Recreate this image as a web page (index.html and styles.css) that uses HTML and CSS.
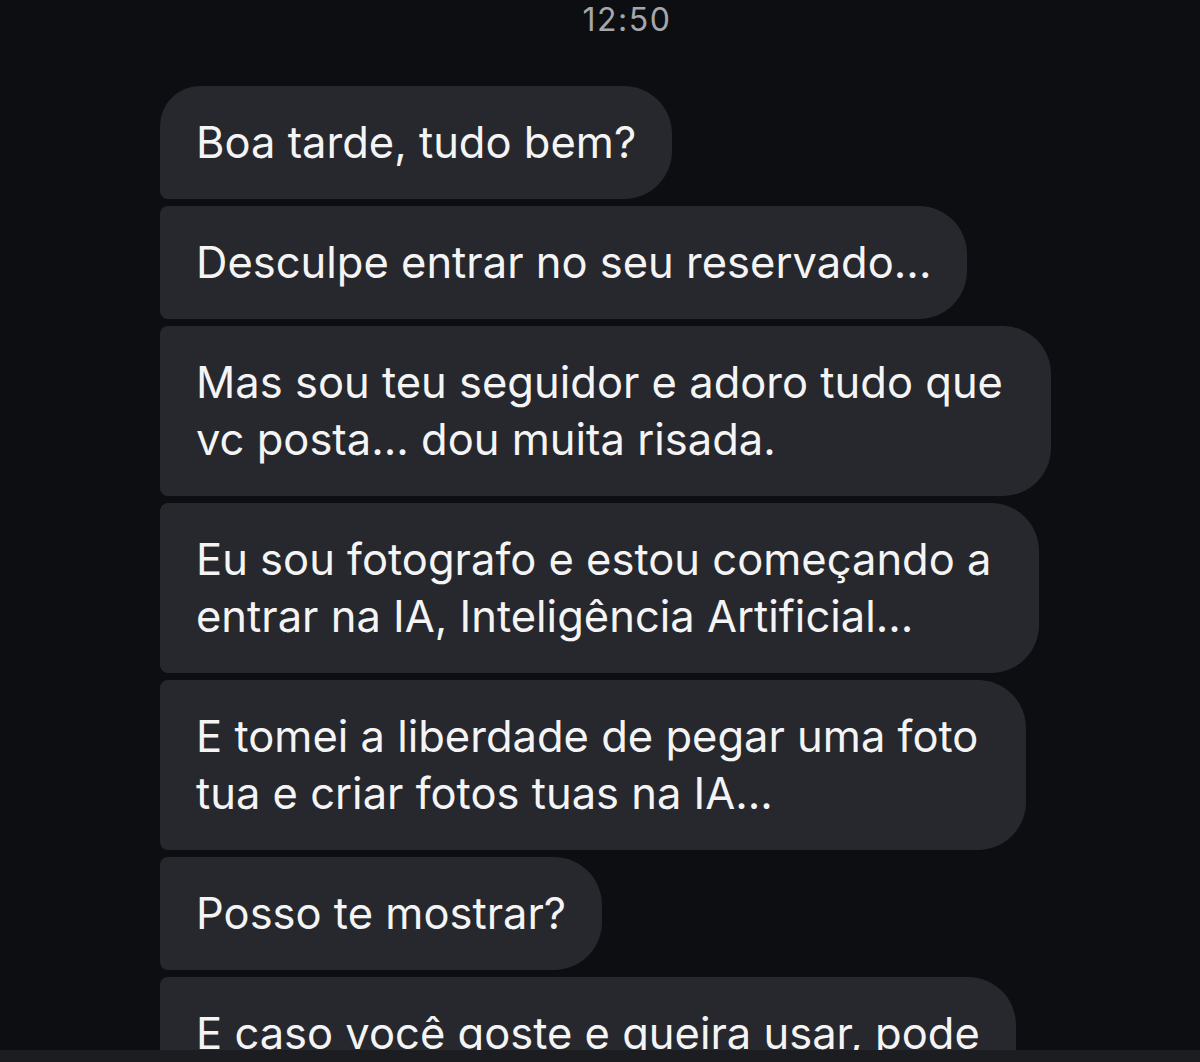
FILE: index.html
```html
<!DOCTYPE html>
<html lang="pt">
<head>
    <meta charset="UTF-8">
    <meta name="viewport" content="width=device-width, initial-scale=1.0">
    <title>Mensagens</title>
    <link rel="stylesheet" href="styles.css">
</head>
<body>

    <div class="chat">
        <div class="time">12:50</div>

        <div class="thread">
            <div class="bubble first">Boa tarde, tudo bem?</div>
            <div class="bubble">Desculpe entrar no seu reservado...</div>
            <div class="bubble wide">Mas sou teu seguidor e adoro tudo que<br>vc posta... dou muita risada.</div>
            <div class="bubble wide">Eu sou fotografo e estou começando a<br>entrar na IA, Inteligência Artificial...</div>
            <div class="bubble wide">E tomei a liberdade de pegar uma foto<br>tua e criar fotos tuas na IA...</div>
            <div class="bubble">Posso te mostrar?</div>
            <div class="bubble">E caso você goste e queira usar, pode<br>ficar à vontade.</div>
        </div>
    </div>

    <div class="bottom-bar"></div>

</body>
</html>
```

FILE: styles.css
```css
body {
    margin: 0;
    height: 1062px;
    overflow: hidden;
    background-color: #0c0e12;
    font-family: 'Inter', 'Noto Sans', sans-serif;
    color: #f4f4f5;
}
.chat {
    height: 1050px;
    overflow: hidden;
}
.time {
    text-align: center;
    font-size: 32px;
    letter-spacing: 1.5px;
    color: #a4a7ac;
    padding-left: 54px;
    line-height: 40px;
    height: 86px;
}
.thread {
    display: flex;
    flex-direction: column;
    align-items: flex-start;
    gap: 7px;
    padding-left: 160px;
}
.bubble {
    background-color: #26282d;
    padding: 28px 36px;
    font-size: 43.5px;
    line-height: 57px;
    border-radius: 8px 48px 48px 8px;
}
.bubble.first {
    border-top-left-radius: 40px;
}
.bubble.wide {
    padding-right: 48px;
}
.bottom-bar {
    height: 12px;
    background-color: #1c1d21;
}
```
